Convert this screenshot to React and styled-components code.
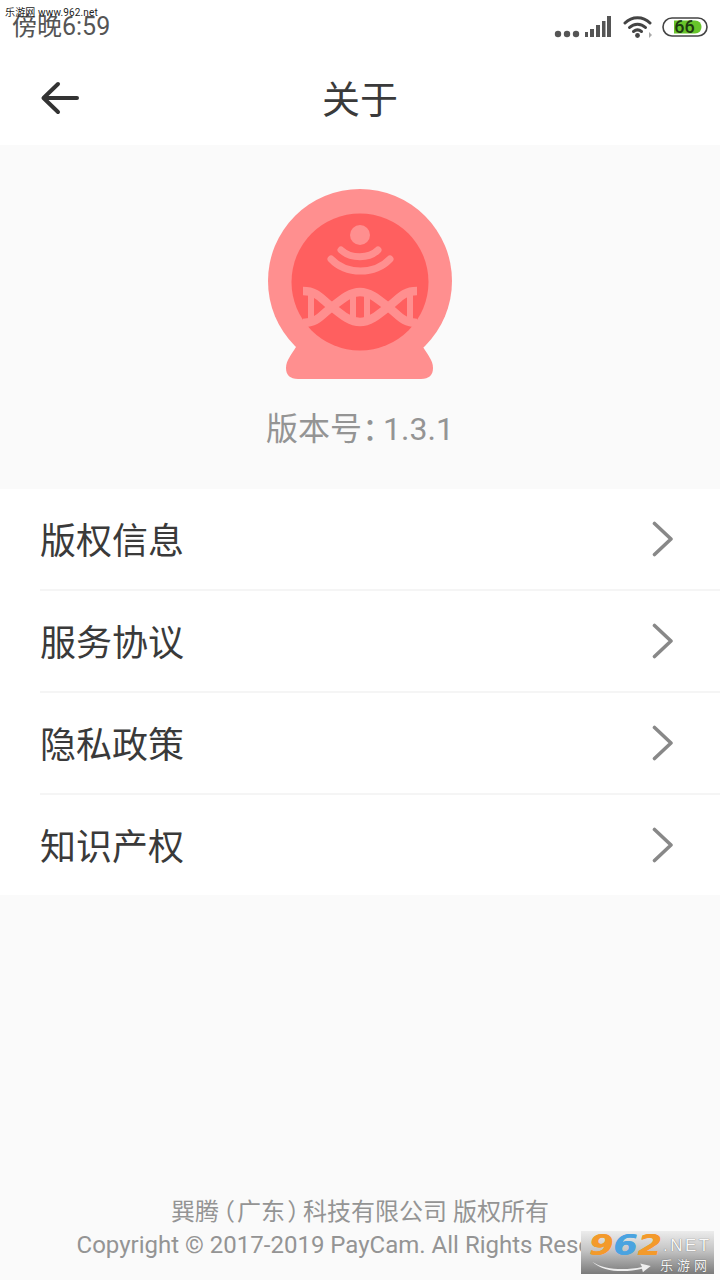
import React from 'react';
import styled, { createGlobalStyle } from 'styled-components';

const GlobalStyle = createGlobalStyle`
  html, body {
    margin: 0;
    padding: 0;
    background: #fafafa;
  }
  * {
    box-sizing: border-box;
  }
`;

const Page = styled.div`
  position: relative;
  width: 720px;
  height: 1280px;
  overflow: hidden;
  display: flex;
  flex-direction: column;
  background: #fafafa;
  font-family: Roboto, "Noto Sans CJK SC", sans-serif;
`;

const StatusBar = styled.div`
  height: 50px;
  flex: none;
  display: flex;
  align-items: center;
  justify-content: space-between;
  padding: 4px 12px 0 12px;
  background: #fff;
`;

const Time = styled.span`
  font-size: 25px;
  line-height: 28px;
  color: #555;
`;

const StatusIcons = styled.div`
  display: flex;
  align-items: center;
`;

const SiteStamp = styled.span`
  position: absolute;
  left: 5px;
  top: 6px;
  font-size: 10px;
  line-height: 14px;
  letter-spacing: 0.15px;
  color: #222;
`;

const Header = styled.header`
  height: 95px;
  flex: none;
  display: flex;
  align-items: center;
  justify-content: center;
  position: relative;
  background: #fff;
`;

const BackIcon = styled.svg`
  position: absolute;
  left: 40px;
  top: 30px;
`;

const Title = styled.h1`
  margin: 0;
  font-size: 38px;
  font-weight: 400;
  color: #3a3a3a;
  line-height: 48px;
  transform: translateY(2px);
`;

const Hero = styled.section`
  height: 344px;
  flex: none;
  display: flex;
  flex-direction: column;
  align-items: center;
  padding-top: 44px;
`;

const Version = styled.div`
  margin-top: 26px;
  font-size: 32px;
  line-height: 44px;
  color: #949494;
`;

const VersionColon = styled.span`
  font-feature-settings: "palt";
  margin-right: 5px;
`;

const Menu = styled.ul`
  margin: 0;
  padding: 0;
  list-style: none;
  background: #fff;
`;

const MenuItem = styled.li`
  height: ${(p) => (p.$last ? '100px' : '102px')};
  margin-left: 40px;
  padding-right: 46px;
  display: flex;
  align-items: center;
  justify-content: space-between;
  font-size: 36px;
  color: #3a3a3a;
  border-bottom: ${(p) => (p.$last ? 'none' : '2px solid #f5f5f5')};
`;

const MenuLabel = styled.span`
  margin-bottom: 2px;
`;

const Footer = styled.footer`
  margin-top: auto;
  padding-bottom: 18px;
  text-align: center;
  color: #949494;
  font-size: 24px;
  line-height: 33px;
  white-space: nowrap;
`;

const Paren = styled.span`
  font-feature-settings: "palt";
  margin: 0 3px;
`;

const Watermark = styled.div`
  position: absolute;
  left: 581px;
  top: 1231px;
  width: 133px;
  height: 43px;
  background: linear-gradient(#ececec 0%, #c4c4c4 45%, #7a7a7a 100%);
`;

const Brand = styled.div`
  position: absolute;
  left: 8px;
  top: 0;
  display: flex;
  align-items: baseline;
  line-height: 28px;
  font-family: "DejaVu Sans", sans-serif;
`;

const Digits = styled.span`
  display: inline-block;
  width: 74px;
  font-size: 29px;
  font-weight: 700;
  font-style: italic;
  transform: scaleX(1.2);
  transform-origin: left center;
  text-shadow: 0.5px 0 0 currentColor;
`;

const Digit = styled.span`
  color: ${(p) => p.$color};
`;

const BrandSuffix = styled.span`
  font-size: 17px;
  letter-spacing: 2.5px;
  color: #f8f8f8;
  font-family: "Liberation Sans", sans-serif;
  text-shadow: 0 0 1px #555;
  transform: translateY(-4px);
`;

const BrandName = styled.span`
  position: absolute;
  right: 3px;
  bottom: 0;
  font-size: 13px;
  line-height: 16px;
  letter-spacing: 4px;
  color: #f6f6f6;
  text-shadow: 0 0 1px #444;
`;

const Swoosh = styled.svg`
  position: absolute;
  left: 6px;
  bottom: 1px;
`;

const Signal = () => (
  <svg width="58" height="24" viewBox="0 0 58 24" style={{ marginRight: 11 }}>
    <g fill="#555">
      <circle cx="4" cy="19" r="3.2" />
      <circle cx="13" cy="19" r="3.2" />
      <circle cx="22" cy="19" r="3.2" />
      <rect x="31" y="17" width="3" height="5" />
      <rect x="36" y="14" width="4" height="8" />
      <rect x="42" y="10" width="4" height="12" />
      <rect x="48" y="6" width="3.5" height="16" />
      <rect x="53" y="1" width="4" height="21" />
    </g>
  </svg>
);

const Wifi = () => (
  <svg width="30" height="24" viewBox="0 0 30 24" style={{ marginRight: 9 }}>
    <g fill="none" stroke="#444" strokeWidth="3" strokeLinecap="round">
      <path d="M2 8 C9 1 20 1 27 8" />
      <path d="M6.5 12.5 C11 8 18 8 22.5 12.5" />
      <path d="M10.5 16.5 C13 14.5 16 14.5 18.5 16.5" />
    </g>
    <circle cx="14.5" cy="20.5" r="2.4" fill="#444" />
    <path d="M26 17 L29 20 L26 23 Z" fill="#aaa" />
  </svg>
);

const Battery = () => (
  <svg width="46" height="20" viewBox="0 0 46 20">
    <rect x="1" y="1" width="44" height="18" rx="9" fill="#fff" stroke="#444" strokeWidth="1.6" />
    <path d="M12 3.5 H33 Q36 3.5 38 5.5 Q41 10 38 14.5 Q36 16.5 33 16.5 H12 Z" fill="#67c52a" />
    <text x="22.5" y="16" textAnchor="middle" fontSize="18" fontWeight="500" fontFamily="Roboto, sans-serif" fill="#1d3a10">66</text>
  </svg>
);

const Chevron = () => (
  <svg width="22" height="36" viewBox="0 0 22 36">
    <path d="M2.5 2.5 L19 18 L2.5 33.5" fill="none" stroke="#888" strokeWidth="3.6" strokeLinecap="round" strokeLinejoin="round" />
  </svg>
);

// the app logo, a camera globe with a wifi mark and a dna strand
const Logo = () => (
  <svg width="186" height="192" viewBox="267 189 186 192">
    <circle cx="360" cy="281" r="92" fill="#ff8f8f" />
    <path d="M296 347 C292 354 286 360 286 368 C286 375 290 379 298 379 H421 C429 379 433 375 433 368 C433 360 427 354 423 347 Z" fill="#ff8f8f" />
    <circle cx="360" cy="282" r="68.5" fill="#ff5f5f" />
    <circle cx="360" cy="235" r="10" fill="#ff8f8f" />
    <g fill="none" stroke="#ff8f8f" strokeLinecap="round">
      <path d="M341 250 C351 259 369 259 378 250" strokeWidth="7" />
      <path d="M331 259 C346 275 375 275 390 259" strokeWidth="7" />
    </g>
    <g fill="none" stroke="#ff8f8f" strokeWidth="8.5">
      <path d="M303 291 C318 291 322 300 332 307 C342 315 350 322 360 322 C370 322 378 315 388 307 C398 300 402 291 417 291" />
      <path d="M303 323 C318 323 322 314 332 307 C342 299 350 292 360 292 C370 292 378 299 388 307 C398 314 402 323 417 323" />
      <path d="M311 292 V322 M353 293 V321 M367 293 V321 M410 292 V322" strokeWidth="6" />
    </g>
  </svg>
);

const items = ['版权信息', '服务协议', '隐私政策', '知识产权'];

export default function App() {
  return (
    <Page>
      <GlobalStyle />
      <StatusBar>
        <Time>傍晚6:59</Time>
        <StatusIcons>
          <Signal />
          <Wifi />
          <Battery />
        </StatusIcons>
      </StatusBar>
      <SiteStamp>乐游网 www.962.net</SiteStamp>

      <Header>
        <BackIcon width="40" height="36" viewBox="0 0 40 36">
          <path d="M37 18 H4 M18 4 L3.5 18 L18 32" fill="none" stroke="#333" strokeWidth="4" strokeLinecap="round" strokeLinejoin="round" />
        </BackIcon>
        <Title>关于</Title>
      </Header>

      <Hero>
        <Logo />
        <Version>版本号<VersionColon>：</VersionColon>1.3.1</Version>
      </Hero>

      <Menu>
        {items.map((item, i) => (
          <MenuItem key={item} $last={i === items.length - 1}>
            <MenuLabel>{item}</MenuLabel>
            <Chevron />
          </MenuItem>
        ))}
      </Menu>

      <Footer>
        <div>巽腾<Paren>（</Paren>广东<Paren>）</Paren>科技有限公司 版权所有</div>
        <div>Copyright © 2017-2019 PayCam. All Rights Reserved.</div>
      </Footer>

      <Watermark>
        <Brand>
          <Digits>
            <Digit $color="#f39a2b">9</Digit>
            <Digit $color="#4aa3e0">6</Digit>
            <Digit $color="#f39a2b">2</Digit>
          </Digits>
          <BrandSuffix>.NET</BrandSuffix>
        </Brand>
        <Swoosh width="68" height="14" viewBox="0 0 68 16">
          <path d="M1 3 C16 13 40 13 58 9 L56 5 L68 8 L59 15 L58 11 C38 16 14 15 1 3 Z" fill="#eee" />
        </Swoosh>
        <BrandName>乐游网</BrandName>
      </Watermark>
    </Page>
  );
}
